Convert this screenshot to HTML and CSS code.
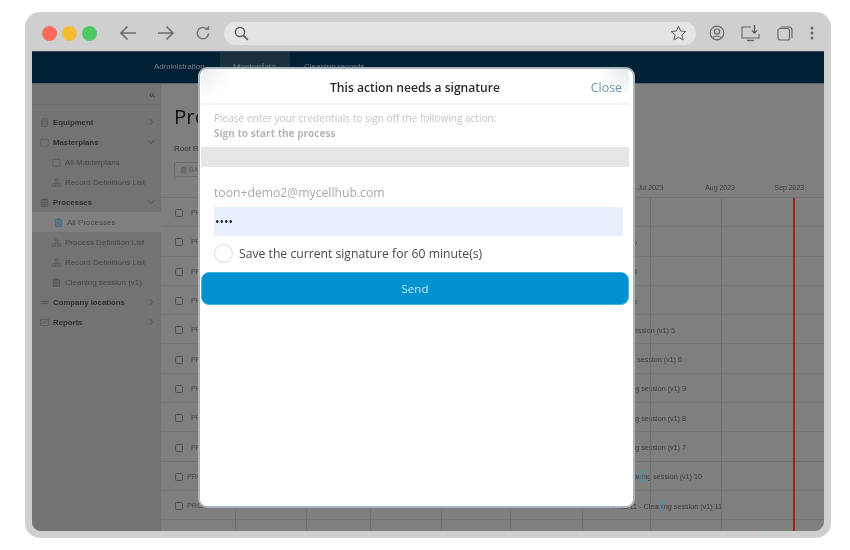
FILE: index.html
```html
<!DOCTYPE html>
<html lang="en">
<head>
  <meta charset="UTF-8" />
  <meta name="viewport" content="width=device-width, initial-scale=1.0" />
  <title>This action needs a signature</title>
  <link rel="stylesheet" href="styles.css">
</head>
<body>

<svg class="defs" width="0" height="0">
  <symbol id="i-equip" viewBox="0 0 10 10"><rect x="2" y=".8" width="6" height="8.4" rx=".8" fill="none" stroke="currentColor" stroke-width=".8"/><path d="M2 3.5h6M2 6.5h6" stroke="currentColor" stroke-width=".7"/></symbol>
  <symbol id="i-cal" viewBox="0 0 10 10"><rect x=".8" y="1.5" width="8.4" height="7.7" rx=".6" fill="none" stroke="currentColor" stroke-width=".7" stroke-dasharray="2 .5"/><path d="M3 .6v1.6M7 .6v1.6" stroke="currentColor" stroke-width=".7"/></symbol>
  <symbol id="i-people" viewBox="0 0 10 10"><circle cx="5" cy="2.4" r="1.7" fill="none" stroke="currentColor" stroke-width=".7"/><path d="M2.4 5.6v1M7.6 5.6v1M2.4 5.6h5.2" fill="none" stroke="currentColor" stroke-width=".6"/><rect x=".8" y="6.6" width="3.4" height="2.6" fill="none" stroke="currentColor" stroke-width=".7"/><rect x="5.8" y="6.6" width="3.4" height="2.6" fill="none" stroke="currentColor" stroke-width=".7"/></symbol>
  <symbol id="i-clip" viewBox="0 0 10 10"><rect x="1.5" y="1.5" width="7" height="8" rx=".6" fill="currentColor" fill-opacity=".3" stroke="currentColor" stroke-width=".8"/><rect x="3.5" y=".5" width="3" height="2" fill="currentColor"/><path d="M3 5h4M3 7h4" stroke="currentColor" stroke-width=".7"/></symbol>
  <symbol id="i-lines" viewBox="0 0 10 10"><path d="M.5 3.8h9M.5 6.2h9" stroke="currentColor" stroke-width="1"/></symbol>
  <symbol id="i-chart" viewBox="0 0 10 10"><rect x=".6" y="1.6" width="8.8" height="6.8" fill="none" stroke="currentColor" stroke-width=".7"/><path d="M1.4 6.4l2.2-2.2 1.7 1.4 3-2.8" fill="none" stroke="currentColor" stroke-width=".6"/></symbol>
  <symbol id="i-right" viewBox="0 0 8 10"><path d="M2 1l4 4-4 4" fill="none" stroke="currentColor" stroke-width=".9"/></symbol>
  <symbol id="i-down" viewBox="0 0 10 8"><path d="M1 2l4 4 4-4" fill="none" stroke="currentColor" stroke-width=".9"/></symbol>
</svg>

<div class="frame">
  <!-- Browser toolbar -->
  <div class="toolbar">
    <div class="dots">
      <span class="dot red"></span>
      <span class="dot yellow"></span>
      <span class="dot green"></span>
    </div>
    <svg class="tool back" width="18" height="16" viewBox="0 0 18 16"><path d="M17 8H2M8.5 1.5L2 8l6.5 6.5" fill="none" stroke="#6e6e6e" stroke-width="1.7"/></svg>
    <svg class="tool forward" width="18" height="16" viewBox="0 0 18 16"><path d="M1 8h15M9.5 1.5L16 8l-6.5 6.5" fill="none" stroke="#6e6e6e" stroke-width="1.7"/></svg>
    <svg class="tool reload" width="16" height="16" viewBox="0 0 16 16"><path d="M13.6 8.4a5.7 5.7 0 1 1-2-4.6" fill="none" stroke="#757575" stroke-width="1.5"/><path d="M9.8 4.9h4.4V.6z" fill="#757575"/></svg>
    <div class="address">
      <svg width="15" height="15" viewBox="0 0 15 15"><circle cx="6" cy="6" r="4.6" fill="none" stroke="#5f5f5f" stroke-width="1.5"/><path d="M9.4 9.4l4.4 4.4" stroke="#5f5f5f" stroke-width="1.7"/></svg>
      <svg class="star" width="17" height="16" viewBox="0 0 17 16"><path d="M8.5 1.2l2.1 4.8 5.2.5-3.9 3.4 1.2 5.1-4.6-2.7-4.6 2.7 1.2-5.1L1.2 6.5l5.2-.5z" fill="none" stroke="#5f5f5f" stroke-width="1"/></svg>
    </div>
    <div class="browser-icons">
      <svg width="16" height="16" viewBox="0 0 16 16"><circle cx="8" cy="8" r="6.8" fill="none" stroke="#666" stroke-width="1.2"/><circle cx="8" cy="6.6" r="2.6" fill="none" stroke="#666" stroke-width="1.2"/><path d="M3.6 12.6c1.2-1.8 7.6-1.8 8.8 0" fill="none" stroke="#666" stroke-width="1.2"/></svg>
      <svg width="20" height="17" viewBox="0 0 20 17"><path d="M10 2H1v11h17V9" fill="none" stroke="#666" stroke-width="1.1"/><path d="M6 15.5h7" stroke="#666" stroke-width="1.4"/><path d="M13.5 0v8M10.8 5.4l2.7 2.8 2.7-2.8" fill="none" stroke="#555" stroke-width="1.2"/></svg>
      <svg width="16" height="15" viewBox="0 0 16 15"><rect x="1" y="2.5" width="11.5" height="11.5" rx="2" fill="none" stroke="#666" stroke-width="1.2"/><path d="M3.5 1h8.5a3 3 0 0 1 3 3v8" fill="none" stroke="#666" stroke-width="1.2"/></svg>
      <svg class="kebab" width="4" height="14" viewBox="0 0 4 14"><circle cx="2" cy="2" r="1.5" fill="#666"/><circle cx="2" cy="7" r="1.5" fill="#666"/><circle cx="2" cy="12" r="1.5" fill="#666"/></svg>
    </div>
  </div>

  <div class="app">
    <nav class="topnav">
      <a class="tab admin">Administration</a>
      <a class="tab active">Masterdata</a>
      <a class="tab">Cleaning records</a>
    </nav>

    <div class="app-body">
      <aside class="sidebar">
        <div class="collapse">«</div>
        <ul class="menu">
          <li class="item top"><svg class="ico"><use href="#i-equip"/></svg>Equipment<svg class="chev"><use href="#i-right"/></svg></li>
          <li class="item top"><svg class="ico"><use href="#i-cal"/></svg>Masterplans<svg class="chev wide"><use href="#i-down"/></svg></li>
          <li class="item sub"><svg class="ico"><use href="#i-cal"/></svg>All Masterplans</li>
          <li class="item sub"><svg class="ico"><use href="#i-people"/></svg>Record Definitions List</li>
          <li class="item top"><svg class="ico"><use href="#i-clip"/></svg>Processes<svg class="chev wide"><use href="#i-down"/></svg></li>
          <li class="item sub selected"><svg class="ico"><use href="#i-clip"/></svg>All Processes</li>
          <li class="item sub"><svg class="ico"><use href="#i-people"/></svg>Process Definition List</li>
          <li class="item sub"><svg class="ico"><use href="#i-people"/></svg>Record Definitions List</li>
          <li class="item sub"><svg class="ico"><use href="#i-clip"/></svg>Cleaning session (v1)</li>
          <li class="item top"><svg class="ico"><use href="#i-lines"/></svg>Company locations<svg class="chev"><use href="#i-right"/></svg></li>
          <li class="item top"><svg class="ico"><use href="#i-chart"/></svg>Reports<svg class="chev"><use href="#i-right"/></svg></li>
        </ul>
      </aside>

      <main class="content">
        <div class="content-head">
          <h1>Processes</h1>
          <div class="crumb">Root Records</div>
          <button class="batch"><svg width="7" height="8" viewBox="0 0 10 10"><use href="#i-clip"/></svg>BATCH</button>
        </div>

        <div class="months">
          <span>Jul 2023</span>
          <span>Aug 2023</span>
          <span>Sep 2023</span>
        </div>

        <div class="rows">
          <div class="row"><span class="check"></span><span class="id">PRC/01</span><span class="task" style="width:380px">Cleaning</span></div>
          <div class="row"><span class="check"></span><span class="id">PRC/02</span><span class="task" style="width:406px">Line setup</span></div>
          <div class="row"><span class="check"></span><span class="id">PRC/03</span><span class="task" style="width:406px">Batch record</span></div>
          <div class="row"><span class="check"></span><span class="id">PRC/04</span><span class="task" style="width:406px">Batch release</span></div>
          <div class="row"><span class="check"></span><span class="id">PRC/05</span><span class="task" style="width:444px">Cleaning session (v1) 5</span></div>
          <div class="row"><span class="check"></span><span class="id">PRC/06</span><span class="task" style="width:451px">Cleaning session (v1) 6</span></div>
          <div class="row"><span class="check"></span><span class="id">PRC/09</span><span class="task" style="width:455px">Cleaning session (v1) 9</span></div>
          <div class="row"><span class="check"></span><span class="id">PRC/08</span><span class="task" style="width:455px">Cleaning session (v1) 8</span></div>
          <div class="row"><span class="check"></span><span class="id">PRC/07</span><span class="task" style="width:455px">Cleaning session (v1) 7</span></div>
          <div class="row strong"><span class="check"></span><span class="id near">PRC/10</span><span class="task" style="width:471px">Cleaning session (v1) 10</span><span class="marker" style="left:478px"></span></div>
          <div class="row"><span class="check"></span><span class="id near">PRC/11</span><span class="task" style="width:491px">PRC/11 - Cleaning session (v1) 11</span><span class="marker" style="left:498px"></span></div>
          <div class="row"><span class="check"></span><span class="id near">PRC/12</span><span class="task" style="width:529px">Cleaning session (v1) 12</span><span class="marker" style="left:603px"></span></div>

          <div class="gridlines">
            <i></i><i></i><i></i><i></i><i></i><i></i><i></i><i></i>
          </div>
          <div class="today"></div>
        </div>
      </main>
    </div>

    <!-- Signature dialog -->
    <div class="modal">
      <div class="modal-head">
        <span class="modal-title">This action needs a signature</span>
        <a class="modal-close">Close</a>
      </div>
      <div class="modal-intro">
        <p>Please enter your credentials to sign off the following action:</p>
        <p class="action">Sign to start the process</p>
      </div>
      <div class="greybar"></div>
      <div class="email">toon+demo2@mycellhub.com</div>
      <div class="password">••••</div>
      <label class="save"><span class="radio"></span>Save the current signature for 60 minute(s)</label>
      <button class="send">Send</button>
    </div>
  </div>
</div>

</body>
</html>
```

FILE: styles.css
```css
* {
  box-sizing: border-box;
}

body {
  margin: 0;
  width: 850px;
  height: 550px;
  padding: 12px 19px 12px 25px;
  background: #fff;
  overflow: hidden;
  font-family: "Liberation Sans", Arial, sans-serif;
}

.defs {
  position: absolute;
}

/* Browser window */
.frame {
  height: 526px;
  padding: 0 7px 7px;
  background: #cfcfcf;
  border-radius: 15px;
  filter: blur(0.55px);
}

.toolbar {
  height: 39px;
  display: flex;
  align-items: center;
  padding: 3px 0 0 10px;
}

.dots {
  display: flex;
  gap: 5px;
}

.dot {
  width: 15px;
  height: 15px;
  border-radius: 50%;
}

.dot.red { background: #fd6a5b; }
.dot.yellow { background: #f6bd30; }
.dot.green { background: #4ec865; }

.tool {
  flex: none;
}

.back { margin-left: 22px; }
.forward { margin-left: 20px; }
.reload { margin-left: 20px; }

.address {
  width: 472px;
  height: 23px;
  margin-left: 13px;
  padding: 0 9px 0 10px;
  display: flex;
  align-items: center;
  justify-content: space-between;
  background: #e4e4e4;
  border-radius: 12px;
}

.browser-icons {
  display: flex;
  align-items: center;
  gap: 16px;
  margin-left: 13px;
}

.kebab {
  margin-left: 1px;
}

/* App behind the dialog */
.app {
  position: relative;
  height: 480px;
  border-radius: 0 0 9px 9px;
  overflow: hidden;
  background: #7f7f7f;
}

.topnav {
  height: 33px;
  display: flex;
  padding-left: 122px;
  background: #012033;
  border-top: 1px solid #3a4a55;
  border-bottom: 1px solid #5c6670;
  font-size: 8px;
}

.tab {
  padding: 0 14px 0 0;
  line-height: 30px;
  color: #72808b;
}

.tab.active {
  width: 70px;
  margin-left: -1px;
  padding: 0 0 0 13px;
  margin-right: 14px;
  background: #182f3e;
  font-size: 8.6px;
}

.tab.admin {
  width: 67px;
  padding: 0;
}

.app-body {
  height: 447px;
  display: flex;
}

.sidebar {
  width: 129px;
  flex: none;
  background: #737373;
  color: #3a3a3a;
}

.collapse {
  height: 21px;
  padding-right: 6px;
  text-align: right;
  font-size: 11px;
  line-height: 21px;
  color: #3d3d3d;
  border-bottom: 1px solid #6c6c6c;
}

.menu {
  margin: 0;
  padding: 7px 0 0;
  list-style: none;
}

.item {
  height: 20px;
  display: flex;
  align-items: center;
  white-space: nowrap;
}

.item.top {
  padding-left: 8px;
  font-size: 7.8px;
  font-weight: bold;
  color: #2f2f2f;
}

.item.sub {
  padding-left: 20px;
  font-size: 8px;
  color: #474747;
}

.item.selected {
  padding-left: 22px;
  background: #808080;
}

.item.selected .ico {
  color: #2d6a80;
}

.ico {
  width: 9px;
  height: 9px;
  flex: none;
  margin-right: 4px;
  color: #525252;
}

.chev {
  width: 6px;
  height: 8px;
  margin-left: auto;
  margin-right: 7px;
  color: #3f3f3f;
}

.chev.wide {
  width: 8px;
  margin-right: 6px;
}

.content {
  flex: 1;
  min-width: 0;
}

.content-head {
  padding: 18px 13px 0;
}

.content-head h1 {
  margin: 0;
  padding-top: 1px;
  font-family: "Open Sans", sans-serif;
  font-size: 20.5px;
  font-weight: 400;
  line-height: 26px;
  color: #141414;
}

.crumb {
  margin-top: 14px;
  font-size: 8px;
  line-height: 12px;
  color: #383838;
}

.batch {
  display: flex;
  align-items: center;
  gap: 2px;
  height: 15px;
  margin-top: 7px;
  padding: 0 5px;
  font-family: inherit;
  font-size: 7px;
  color: #5c5c5c;
  background: none;
  border: 1px solid #6b6b6b;
  border-radius: 2px;
}

.months {
  height: 21px;
  display: flex;
  padding-left: 455px;
  border-bottom: 1px solid #737373;
}

.months span {
  width: 71px;
  text-align: center;
  font-size: 6.9px;
  line-height: 21px;
  color: #3c3c3c;
}

.rows {
  position: relative;
  height: 333px;
  overflow: hidden;
}

.row {
  position: relative;
  height: 29.3px;
  display: flex;
  align-items: center;
  padding: 2px 0 0 14px;
  border-bottom: 1px solid #767676;
  font-size: 7.2px;
  color: #3a3a3a;
  white-space: nowrap;
}

.row.strong {
  box-shadow: 0 -1px 0 #707070;
}

.check {
  width: 8px;
  height: 8px;
  flex: none;
  border: 1px solid #505050;
  border-radius: 1.5px;
}

.id {
  width: 40px;
  flex: none;
  margin-left: 8px;
  margin-bottom: 1px;
  color: #484848;
}

.id.near {
  margin-left: 4px;
  margin-right: 4px;
}

.task {
  flex: none;
  text-align: right;
}

.marker {
  position: absolute;
  width: 5px;
  height: 11px;
  background: rgba(70, 170, 180, 0.3);
  border: 1px solid #4a8f9b;
}

.gridlines {
  position: absolute;
  top: 0;
  bottom: 0;
  left: 74px;
  display: grid;
  grid-template-columns: 71px 64px 71px 69px 72px 68px 71px 72px;
  pointer-events: none;
}

.gridlines i {
  border-left: 1px solid #707070;
}

.today {
  position: absolute;
  top: 0;
  bottom: 0;
  left: 632px;
  width: 1.5px;
  background: #a61e1e;
}

/* Dialog */
.modal {
  position: absolute;
  left: 166px;
  top: 16px;
  width: 437px;
  height: 441px;
  padding: 0 4px 0 1px;
  display: flex;
  flex-direction: column;
  font-family: "Open Sans", sans-serif;
  background: #fff;
  border: 2px solid #aab4bb;
  border-radius: 9px;
}

.modal-head {
  position: relative;
  height: 36px;
  flex: none;
  display: flex;
  align-items: center;
  justify-content: center;
  padding-top: 3px;
  border-bottom: 2px solid #f1f1f1;
  border-radius: 7px 7px 0 0;
  background:
    radial-gradient(circle at top left, #e9edf1, rgba(255, 255, 255, 0) 32px),
    radial-gradient(circle at top right, #e6ebf0, rgba(255, 255, 255, 0) 32px);
}

.modal-title {
  font-size: 12.1px;
  font-weight: 600;
  color: #2b2b2b;
}

.modal-close {
  position: absolute;
  right: 7px;
  font-size: 12.4px;
  color: #6d95ad;
}

.modal-intro {
  height: 42px;
  flex: none;
  padding: 6px 0 0 13px;
  font-size: 10.05px;
  line-height: 15px;
  color: #c4c4c4;
}

.modal-intro p {
  margin: 0;
}

.modal-intro .action {
  font-weight: 700;
  color: #b7b7b7;
}

.greybar {
  height: 20px;
  flex: none;
  background: #e6e6e6;
}

.email {
  height: 40px;
  flex: none;
  padding-left: 13px;
  font-size: 12.2px;
  line-height: 52px;
  color: #a9a9a9;
}

.password {
  height: 29px;
  flex: none;
  margin: 0 6px 0 13px;
  padding-left: 1px;
  background: #e8f0fe;
  font-size: 12px;
  line-height: 30px;
  color: #222;
}

.save {
  height: 36px;
  flex: none;
  display: flex;
  align-items: center;
  padding: 0 0 1px 13px;
  font-size: 12.2px;
  color: #4a4a4a;
}

.radio {
  width: 19px;
  height: 19px;
  margin-right: 6px;
  border: 1px solid #d8d8d8;
  border-radius: 50%;
}

.send {
  height: 33px;
  flex: none;
  font-family: inherit;
  font-size: 11.5px;
  color: #c6e6f5;
  background: #0091d0;
  border: 1px solid #45b2e0;
  border-radius: 8px;
}
```
